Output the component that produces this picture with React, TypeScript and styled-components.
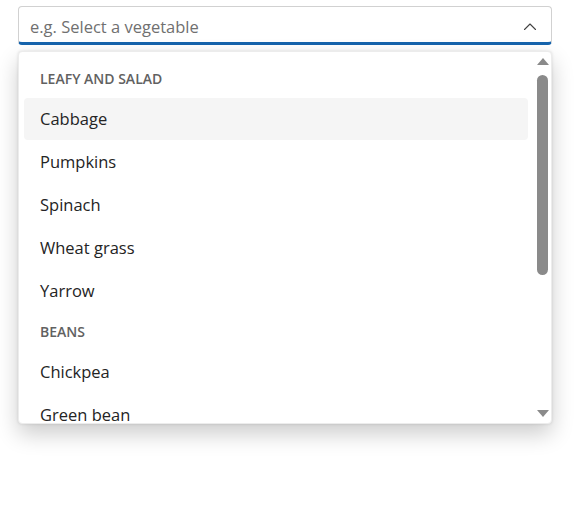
import React from 'react';
import styled, { createGlobalStyle } from 'styled-components';

const GlobalStyle = createGlobalStyle`
  html, body { margin: 0; padding: 0; background: #ffffff; }
  body {
    font-family: "Segoe UI", "Open Sans", "Noto Sans", sans-serif;
    color: #242424;
  }
`;

const Page = styled.div`
  padding: 6px 0 60px 18px;
  width: 534px;
  display: flex;
  flex-direction: column;
  gap: 6px;
`;

const Field = styled.div`
  height: 39px;
  box-sizing: border-box;
  display: flex;
  align-items: center;
  padding: 0 14px 0 11px;
  border: 1px solid #d1d1d1;
  border-bottom: 3px solid #1764ad;
  border-radius: 4px;
  background: #ffffff;
`;

const Placeholder = styled.span`
  flex: 1;
  font-size: 16.5px;
  line-height: 22px;
  color: #707070;
  padding-top: 4px;
`;

const Chevron = styled.svg`
  width: 14px;
  height: 14px;
  color: #424242;
  margin-top: 4px;
`;

const Listbox = styled.div`
  height: 373px;
  box-sizing: border-box;
  border: 1px solid #ececec;
  border-radius: 4px;
  background: #ffffff;
  box-shadow: 0 0 3px rgba(0, 0, 0, 0.12), 0 10px 22px rgba(0, 0, 0, 0.2);
  display: flex;
  overflow: hidden;
`;

const Options = styled.div`
  flex: 1;
  overflow: hidden;
  padding: 7px 6px 0 5px;
  display: flex;
  flex-direction: column;
`;

const Group = styled.div`
  display: flex;
  flex-direction: column;
  gap: 1px;
`;

const GroupLabel = styled.div`
  height: 38px;
  flex-shrink: 0;
  display: flex;
  align-items: center;
  padding: 1px 16px 0;
  box-sizing: border-box;
  font-size: 14px;
  font-weight: 600;
  color: #616161;
  text-transform: uppercase;
`;

const Option = styled.div<{ $active?: boolean }>`
  height: 42px;
  flex-shrink: 0;
  box-sizing: border-box;
  display: flex;
  align-items: center;
  padding: 0 16px 1px;
  font-size: 16.5px;
  line-height: 20px;
  border-radius: 4px;
  background: ${p => (p.$active ? '#f5f5f5' : 'transparent')};
`;

const ScrollBar = styled.div`
  width: 17px;
  flex-shrink: 0;
  display: flex;
  flex-direction: column;
  align-items: center;
`;

const ScrollButton = styled.div`
  height: 19px;
  flex-shrink: 0;
  display: flex;
  align-items: center;
  justify-content: center;
`;

const Track = styled.div`
  flex: 1;
  width: 100%;
  display: flex;
  justify-content: center;
`;

const Thumb = styled.div`
  width: 11px;
  border-radius: 6px;
  background: #8a8a8a;
`;

const groups = [
  { label: 'Leafy and salad', items: ['Cabbage', 'Pumpkins', 'Spinach', 'Wheat grass', 'Yarrow'] },
  { label: 'Beans', items: ['Chickpea', 'Green bean'] },
];

const Arrow: React.FC<{ down?: boolean }> = ({ down }) => (
  <svg width="14" height="9" viewBox="0 0 14 9">
    <path d={down ? 'M1 1 L13 1 L7 8 Z' : 'M1 8 L13 8 L7 1 Z'} fill="#8a8a8a" />
  </svg>
);

const App: React.FC = () => {
  const thumbTop = 4;
  const thumbHeight = 200;
  return (
    <>
      <GlobalStyle />
      <Page>
        <Field>
          <Placeholder>e.g. Select a vegetable</Placeholder>
          <Chevron viewBox="0 0 14 14" fill="none">
            <path d="M1.5 9.5 L7 4 L12.5 9.5" stroke="currentColor" strokeWidth="1.1" strokeLinecap="round" strokeLinejoin="round" />
          </Chevron>
        </Field>
        <Listbox role="listbox">
          <Options>
            {groups.map(g => (
              <Group key={g.label}>
                <GroupLabel>{g.label}</GroupLabel>
                {g.items.map(item => (
                  <Option key={item} $active={item === 'Cabbage'}>{item}</Option>
                ))}
              </Group>
            ))}
          </Options>
          <ScrollBar>
            <ScrollButton><Arrow /></ScrollButton>
            <Track>
              <Thumb style={{ marginTop: thumbTop, height: thumbHeight }} />
            </Track>
            <ScrollButton><Arrow down /></ScrollButton>
          </ScrollBar>
        </Listbox>
      </Page>
    </>
  );
};

export default App;
